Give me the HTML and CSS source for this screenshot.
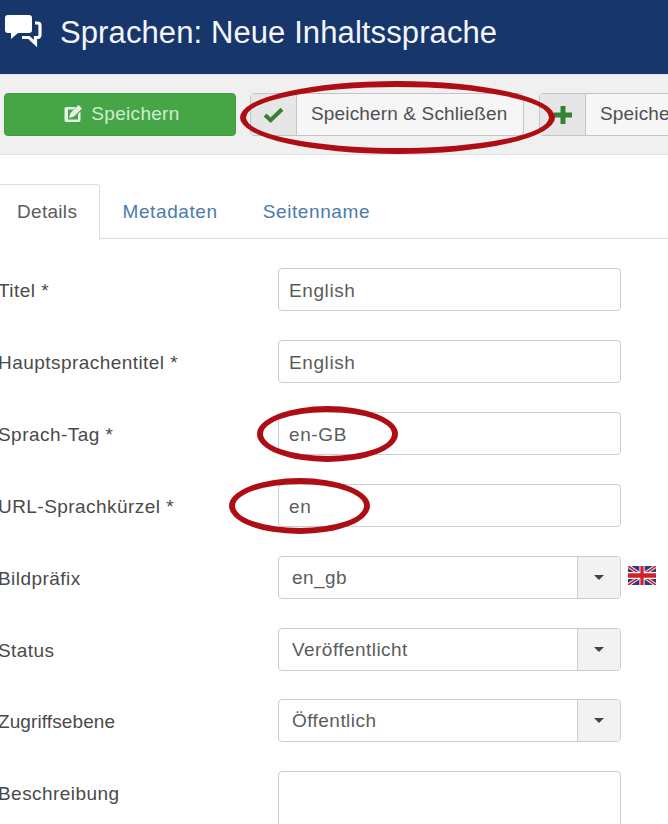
FILE: index.html
```html
<!DOCTYPE html>
<html lang="de">
<head>
<meta charset="utf-8">
<title>Sprachen: Neue Inhaltssprache</title>
<link rel="stylesheet" href="styles.css">
</head>
<body>
<header class="header">
  <svg class="header-icon" viewBox="0 0 40 34" width="40" height="34" aria-hidden="true">
    <path fill="#fff" d="M4 1h21a3 3 0 0 1 3 3v12a3 3 0 0 1-3 3H14l-7 6v-6H4a3 3 0 0 1-3-3V4a3 3 0 0 1 3-3z"/>
    <path fill="none" stroke="#fff" stroke-width="3.200" d="M31 9h2.500a2.500 2.500 0 0 1 2.500 2.500V21a2.500 2.500 0 0 1-2.500 2.500h-2v6l-6.500-6H18"/>
  </svg>
  <h1 class="title">Sprachen: Neue Inhaltssprache</h1>
</header>

<div class="toolbar">
  <button class="btn-save">
    <svg viewBox="0 0 20 20" width="20" height="20" aria-hidden="true">
      <path fill="#e4f3e3" d="M3 3h10l-2.500 2.500H5v10h10V10l2.500-2.500V16a2 2 0 0 1-2 2H3a1.500 1.500 0 0 1-1.500-1.500V4.500A1.500 1.500 0 0 1 3 3z"/>
      <path fill="#e4f3e3" d="M15.500 1l3.500 3.500-8 8-5 1.500 1.500-5z"/>
    </svg>
    <span>Speichern</span>
  </button>
  <div class="btn-group btn-close">
    <span class="btn-icon">
      <svg viewBox="0 0 22 17" width="21" height="16" aria-hidden="true"><path fill="none" stroke="#378137" stroke-width="4.400" d="M2 8.500l6 5.500L20 2.500"/></svg>
    </span>
    <span class="btn-text">Speichern &amp; Schließen</span>
  </div>
  <div class="btn-group btn-new">
    <span class="btn-icon">
      <svg viewBox="0 0 20 20" width="20" height="20" aria-hidden="true"><path fill="#378137" d="M7.500 1h5v6.500H19v5h-6.500V19h-5v-6.500H1v-5h6.500z"/></svg>
    </span>
    <span class="btn-text">Speichern &amp; Neu</span>
  </div>
</div>

<nav class="tabs">
  <a class="tab tab-active">Details</a>
  <a class="tab">Metadaten</a>
  <a class="tab">Seitenname</a>
</nav>

<form class="form">
  <div class="row"><label class="label">Titel *</label><div class="field">English</div></div>
  <div class="row"><label class="label">Hauptsprachentitel *</label><div class="field">English</div></div>
  <div class="row"><label class="label">Sprach-Tag *</label><div class="field">en-GB</div></div>
  <div class="row"><label class="label">URL-Sprachkürzel *</label><div class="field">en</div></div>
  <div class="row"><label class="label">Bildpräfix</label>
    <div class="select"><span class="select-value">en_gb</span><span class="select-arrow"><i class="caret"></i></span></div>
    <svg class="flag" viewBox="0 0 60 30" width="28" height="19" preserveAspectRatio="none" aria-hidden="true">
      <rect width="60" height="30" fill="#2b3f80"/>
      <path stroke="#fff" stroke-width="6" d="M0 0l60 30M60 0L0 30"/>
      <path stroke="#d0202e" stroke-width="3" d="M0 0l60 30M60 0L0 30"/>
      <path stroke="#fff" stroke-width="11" d="M30 0v30M0 15h60"/>
      <path stroke="#d0202e" stroke-width="7" d="M30 0v30M0 15h60"/>
    </svg>
  </div>
  <div class="row"><label class="label">Status</label>
    <div class="select"><span class="select-value">Veröffentlicht</span><span class="select-arrow"><i class="caret"></i></span></div>
  </div>
  <div class="row row-tight"><label class="label label-narrow">Zugriffsebene</label>
    <div class="select"><span class="select-value">Öffentlich</span><span class="select-arrow"><i class="caret"></i></span></div>
  </div>
  <div class="row"><label class="label">Beschreibung</label><div class="field field-tall"></div></div>
</form>

<div class="ring ring-toolbar"></div>
<div class="ring ring-tag"></div>
<div class="ring ring-url"></div>
</body>
</html>
```
FILE: styles.css
```css
* { box-sizing: border-box; }
html, body { margin: 0; height: 824px; overflow: hidden; background: #fff; }
body {
  position: relative;
  font-family: "Liberation Sans", Arial, sans-serif;
  font-size: 19px;
  color: #5c5c5c;
}
.header {
  height: 74px;
  background: #17366b;
  display: flex;
  align-items: center;
  padding: 0 0 7px 4px;
  gap: 16px;
  border-bottom: 1px solid #17366b;
}
.header-icon { flex: none; margin-top: -5px; }
.title {
  margin: 0;
  color: #f4f6fa;
  font-size: 31px;
  font-weight: 400;
  letter-spacing: 0.1px;
  white-space: nowrap;
}
.toolbar {
  height: 81px;
  background: #f0f0f0;
  border-top: 1px solid #dfe4ee;
  border-bottom: 1px solid #e2e2e2;
  display: flex;
  align-items: flex-start;
  padding: 18px 0 0 4px;
  overflow: hidden;
}
.btn-save {
  width: 232px;
  height: 43px;
  flex: none;
  background: #46a546;
  border: 1px solid #3e9a3e;
  border-radius: 4px;
  color: #cfeecf;
  font: inherit;
  letter-spacing: 0.3px;
  display: flex;
  align-items: center;
  justify-content: center;
  gap: 8px;
  padding: 0 0 2px 3px;
}
.btn-group {
  height: 43px;
  flex: none;
  display: flex;
  background: #f6f6f6;
  border: 1px solid #c4c4c4;
  border-radius: 4px;
  white-space: nowrap;
}
.btn-close { width: 274px; margin-left: 14px; }
.btn-new { margin-left: 15px; }
.btn-icon {
  width: 46px;
  flex: none;
  background: #e6e6e6;
  border-right: 1px solid #c4c4c4;
  display: flex;
  align-items: center;
  justify-content: center;
}
.btn-text {
  flex: 1;
  padding: 0 14px;
  line-height: 40px;
  color: #505050;
  letter-spacing: 0.15px;
}
.tabs {
  height: 84px;
  padding-top: 29px;
  display: flex;
  align-items: stretch;
  border-bottom: 1px solid #ddd;
}
.tab {
  display: block;
  height: 55px;
  line-height: 56px;
  padding: 0 22.500px;
  color: #4a7bad;
  letter-spacing: 0.6px;
}
.tab-active {
  width: 105px;
  margin-left: -5px;
  height: 56px;
  background: #fff;
  color: #5c5c5c;
  border: 1px solid #ddd;
  border-bottom: 0;
  border-radius: 4px 4px 0 0;
  padding: 0 0 0 21px;
  line-height: 54px;
  letter-spacing: 0.3px;
}
.form {
  padding-top: 29px;
  display: flex;
  flex-direction: column;
  gap: 29px;
}
.row {
  display: flex;
  align-items: center;
  height: 43px;
  margin-left: -2px;
}
.row-tight { margin-top: -1px; }
.label {
  width: 280px;
  flex: none;
  color: #4a4a4a;
  letter-spacing: 0.45px;
  padding-top: 2px;
}
.label-narrow { letter-spacing: 0.1px; }
.field {
  width: 343px;
  height: 43px;
  border: 1px solid #ccc;
  border-radius: 4px;
  padding: 0 10px;
  line-height: 43px;
  color: #5c5c5c;
  letter-spacing: 0.6px;
}
.field-tall { height: 80px; flex: none; align-self: flex-start; }
.select {
  width: 343px;
  height: 43px;
  display: flex;
  border: 1px solid #ccc;
  border-radius: 4px;
  overflow: hidden;
}
.select-value {
  flex: 1;
  padding: 0 13px;
  line-height: 41px;
  color: #5c5c5c;
  letter-spacing: 0.45px;
}
.select-arrow {
  width: 43px;
  flex: none;
  background: #f2f2f2;
  border-left: 1px solid #ccc;
  display: flex;
  align-items: center;
  justify-content: center;
}
.caret {
  width: 0;
  height: 0;
  border-left: 5px solid transparent;
  border-right: 5px solid transparent;
  border-top: 5px solid #444;
}
.flag { flex: none; margin: -4px 0 0 7px; }
.ring {
  position: absolute;
  border: 6px solid #ae0e13;
  border-radius: 50%;
}
.ring-toolbar { left: 240px; top: 81px; width: 315px; height: 73px; }
.ring-tag { left: 257px; top: 406px; width: 141px; height: 56px; }
.ring-url { left: 229px; top: 478px; width: 141px; height: 56px; }
```
